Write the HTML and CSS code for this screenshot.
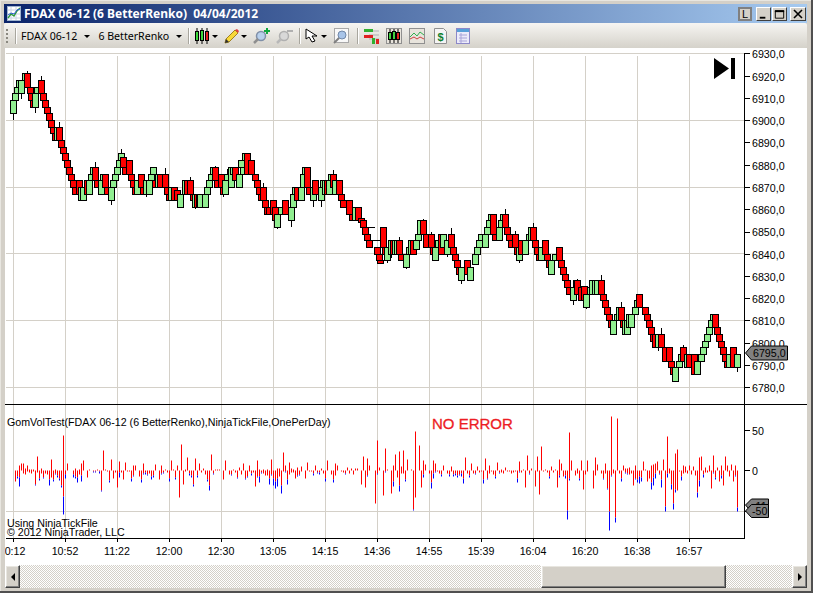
FILE: index.html
```html
<!DOCTYPE html>
<html lang="en">
<head>
<meta charset="utf-8">
<title>FDAX 06-12 (6 BetterRenko) 04/04/2012</title>
<link rel="stylesheet" href="styles.css">
</head>
<body>
<div class="window">
  <header class="titlebar">
    <svg class="title-icon" width="14" height="15" viewBox="0 0 14 15"><rect x=".5" y=".5" width="13" height="14" fill="#fff" stroke="#9fb4d0"/><path d="M1 4h12M1 8h12M1 12h12M4 1v13M9 1v13" stroke="#c8d4e4"/><path d="M1 12l3-4 3 2 3-5 3-3" fill="none" stroke="#2a9a3a" stroke-width="1.3"/><path d="M1 9l3-2 3 1 3-4 3-1" fill="none" stroke="#2f5fd0"/></svg>
    <span class="title-text">FDAX 06-12 (6 BetterRenko)  04/04/2012</span>
    <span class="win-buttons">
      <span class="win-btn lock">L</span>
      <span class="win-btn"><svg width="14" height="12" viewBox="0 0 14 12"><path d="M3 9h6v2H3z"/></svg></span>
      <span class="win-btn"><svg width="14" height="12" viewBox="0 0 14 12"><path d="M2.5 2.500h9v8h-9z" fill="none" stroke="#000"/><path d="M2 2h10v2H2z"/></svg></span>
      <span class="win-btn gap"><svg width="14" height="12" viewBox="0 0 14 12"><path d="M3 2l8 8M11 2l-8 8" stroke="#000" stroke-width="1.6"/></svg></span>
    </span>
  </header>

  <nav class="toolbar">
    <span class="grip"></span>
    <span class="sep"></span>
    <span class="tb-label first">FDAX 06-12</span><span class="caret"></span>
    <span class="tb-label">6 BetterRenko</span><span class="caret"></span>
    <span class="sep"></span>
    <svg class="ico" width="16" height="16" viewBox="0 0 16 16"><path d="M3 0v16M8 0v16M13 0v16" stroke="#000"/><rect x="1.500" y="3.500" width="3" height="9" fill="#3cd83c" stroke="#000"/><rect x="6.500" y="2.500" width="3" height="10" fill="#3cd83c" stroke="#000"/><rect x="11.500" y="3.500" width="3" height="9" fill="#e82020" stroke="#000"/></svg><span class="caret near"></span>
    <svg class="ico wide" width="15" height="16" viewBox="0 0 15 16"><path d="M2 11L11 2l3 3-9 9-4 1z" fill="#f8d838" stroke="#a08020"/><path d="M11 2l3 3 1-2-2-2z" fill="#e04040"/><path d="M1 15l1-4 3 3z" fill="#303030"/></svg><span class="caret near"></span>
    <svg class="ico wide" width="17" height="16" viewBox="0 0 17 16"><circle cx="8" cy="8" r="4.500" fill="#b8d0ec" stroke="#8090a8" stroke-width="1.500"/><path d="M5 11l-4 4" stroke="#8f8f8f" stroke-width="2.500"/><path d="M11 3h6M14 0v6" stroke="#10a840" stroke-width="2"/></svg>
    <svg class="ico gapped" width="17" height="16" viewBox="0 0 17 16"><circle cx="8" cy="8" r="4.500" fill="#d8d8d8" stroke="#b0b0b0" stroke-width="1.500"/><path d="M5 11l-4 4" stroke="#b8b8b8" stroke-width="2.500"/><path d="M11 3h6" stroke="#b0b0b0" stroke-width="2"/></svg>
    <span class="sep"></span>
    <svg class="ico" width="14" height="16" viewBox="0 0 14 16"><path d="M1 1v10l3-2 3 5 3-1-3-5h5z" fill="#fff" stroke="#000"/></svg><span class="caret near"></span>
    <svg class="ico wide" width="16" height="16" viewBox="0 0 16 16"><rect x="1.500" y=".500" width="14" height="14" fill="#f8f8f8" stroke="#a8a8a8"/><circle cx="9" cy="7" r="4" fill="#a8c4e8" stroke="#7088a8"/><path d="M6 10l-5 5" stroke="#808080" stroke-width="2"/></svg>
    <span class="sep s2"></span>
    <svg class="ico" width="17" height="16" viewBox="0 0 17 16"><path d="M6 3h10M6 7h10M6 11h10" stroke="#b0b0b0"/><path d="M1 1h9v3H1z" fill="#30b030"/><path d="M1 7h9v3H1z" fill="#e02020"/><path d="M9 10h3v6H9z" fill="#30b030"/><path d="M13 11h3v5h-3z" fill="#e02020"/></svg>
    <svg class="ico gapped" width="16" height="16" viewBox="0 0 16 16"><rect x=".500" y=".500" width="15" height="15" fill="#e8e4dc" stroke="#909090"/><path d="M4 1v14M8 1v14M12 1v14" stroke="#000"/><rect x="2.500" y="4.500" width="3" height="7" fill="#40d040" stroke="#000"/><rect x="6.500" y="3.500" width="3" height="8" fill="#40d040" stroke="#000"/><rect x="10.500" y="4.500" width="3" height="7" fill="#e02020" stroke="#000"/></svg>
    <svg class="ico gapped2" width="16" height="16" viewBox="0 0 16 16"><rect x=".500" y=".500" width="15" height="15" fill="#e8e4dc" stroke="#909090"/><path d="M1 9l4-4 3 3 3-4 4 3" fill="none" stroke="#30b050"/><path d="M1 11l4-2 3 2 3-2 4 2" fill="none" stroke="#d04040"/></svg>
    <svg class="ico gapped3" width="13" height="16" viewBox="0 0 13 16"><path d="M.5.500h9l3 3v12H.5z" fill="#f4f4f4" stroke="#909090"/><text class="dollar" x="6.500" y="12.500">$</text></svg>
    <svg class="ico gapped4" width="14" height="16" viewBox="0 0 14 16"><rect x=".500" y=".500" width="13" height="15" fill="#ecebfa" stroke="#8c88c8"/><path d="M1 1h12v3H1z" fill="#58a0d8"/><path d="M3 7h8M3 10h8M3 13h8" stroke="#a8a4d8"/><path d="M5 5v10" stroke="#a8a4d8"/></svg>
  </nav>

  <main class="chart-wrap">
    <svg class="chart" width="802" height="517" viewBox="5 48 802 517">
      <path class="grid" d="M13.500 56v482M65.500 56v482M117.500 56v482M169.500 56v482M221.500 56v482M273.500 56v482M325.500 56v482M377.500 56v482M429.500 56v482M481.500 56v482M533.500 56v482M585.500 56v482M637.500 56v482M689.500 56v482"/>
      <path class="grid" d="M6 53.500h739M6 120.500h739M6 187.500h739M6 253.500h739M6 320.500h739M6 387.500h739M6 511.500h739"/>
      <g id="candles"></g>
      <g id="bars"></g>
      <path class="axis" d="M744.500 53v486M5 404.500h803M6 538.500h739"/>
      <path class="axis" d="M745 53.500h5M745 76.500h5M745 98.500h5M745 120.500h5M745 142.500h5M745 165.500h5M745 187.500h5M745 209.500h5M745 232.500h5M745 254.500h5M745 276.500h5M745 298.500h5M745 320.500h5M745 343.500h5M745 365.500h5M745 387.500h5M745 430.500h5M745 470.500h5M745 511.500h5"/>
      <path class="axis" d="M13.500 538v4M65.500 538v4M117.500 538v4M169.500 538v4M221.500 538v4M273.500 538v4M325.500 538v4M377.500 538v4M429.500 538v4M481.500 538v4M533.500 538v4M585.500 538v4M637.500 538v4M689.500 538v4"/>

      <path class="jump" d="M714 58l15 10.500-15 10.500zM731 58h4v21h-4z"/>

      <g class="lbl">
        <text x="752" y="58">6930,0</text><text x="752" y="81">6920,0</text><text x="752" y="103">6910,0</text><text x="752" y="125">6900,0</text><text x="752" y="147">6890,0</text><text x="752" y="170">6880,0</text><text x="752" y="192">6870,0</text><text x="752" y="214">6860,0</text><text x="752" y="236">6850,0</text><text x="752" y="259">6840,0</text><text x="752" y="281">6830,0</text><text x="752" y="303">6820,0</text><text x="752" y="325">6810,0</text><text x="752" y="348">6800,0</text><text x="752" y="370">6790,0</text><text x="752" y="392">6780,0</text>
        <text x="752" y="435">50</text><text x="752" y="475">0</text>
      </g>

      <path class="tag" d="M745.500 505l6-6h17v13h-17z"/>
      <text class="lbl-t" x="752" y="510">-11</text>
      <path class="tag" d="M745.500 511l6-6.500h17v13h-17z"/>
      <text class="lbl-t" x="752" y="515">-50</text>
      <path class="tag" d="M745.500 353l6-7h36v14h-36z"/>
      <text class="lbl-t" x="753" y="357">6795,0</text>

      <text class="lbl-t" x="7" y="426">GomVolTest(FDAX 06-12 (6 BetterRenko),NinjaTickFile,OnePerDay)</text>
      <text class="lbl-t" x="7" y="527">Using NinjaTickFile</text>
      <text class="lbl-t" x="7" y="536">© 2012 NinjaTrader, LLC</text>
      <text class="noerr" x="432" y="429">NO ERROR</text>

      <g class="lbl mid">
        <text x="15" y="555">0:12</text><text x="65" y="555">10:52</text><text x="117" y="555">11:22</text><text x="169" y="555">12:00</text><text x="221" y="555">12:30</text><text x="273" y="555">13:05</text><text x="325" y="555">14:15</text><text x="377" y="555">14:36</text><text x="429" y="555">14:55</text><text x="481" y="555">15:39</text><text x="533" y="555">16:04</text><text x="585" y="555">16:20</text><text x="637" y="555">16:38</text><text x="689" y="555">16:57</text>
      </g>
    </svg>
  </main>

  <div class="scrollbar">
    <span class="sb-btn"><span class="arrow-l"></span></span>
    <span class="sb-track-a"></span>
    <span class="sb-thumb"></span>
    <span class="sb-track-b"></span>
    <span class="sb-btn"><span class="arrow-r"></span></span>
  </div>
</div>
<script src="chart.js"></script>
</body>
</html>
```
FILE: styles.css
```css
* { box-sizing: border-box; }
html, body { margin: 0; padding: 0; background: #d4d0c8; }
.window {
  width: 813px; height: 593px; overflow: hidden;
  display: flex; flex-direction: column;
  padding: 4px 4px 2px 4px;
  background: #d4d0c8;
  border-right: 2px solid #505050;
  border-bottom: 2px solid #505050;
  box-shadow: inset 1px 1px 0 #e8e6e0;
}
.titlebar {
  height: 19px; flex: none;
  display: flex; align-items: center;
  padding: 0 1px 0 3px;
  background: linear-gradient(90deg, #0a246a, #a6caf0);
  color: #fff;
}
.title-icon { flex: none; margin-right: 3px; }
.title-text {
  font: bold 12px "Noto Sans", sans-serif; white-space: pre;
}
.win-buttons { margin-left: auto; display: flex; gap: 1px; }
.win-btn {
  width: 15px; height: 14px;
  display: flex; align-items: center; justify-content: center;
  background: #d4d0c8;
  border: 1px solid; border-color: #fff #404040 #404040 #fff;
}
.win-btn.lock {
  width: 14px; margin-right: 3px;
  font: 11px "Liberation Sans", sans-serif; color: #000;
  border: 2px solid #808080; background: #d4d0c8;
}
.win-btn.gap { margin-left: 2px; width: 16px; }
.toolbar {
  height: 25px; flex: none;
  display: flex; align-items: center;
  padding: 0 0 0 2px;
  background: linear-gradient(180deg, #f6f5f2, #d5d2ca);
  border-radius: 2px;
  font: 10.6px "Noto Sans", sans-serif; color: #000;
}
.grip { width: 2px; height: 14px; margin-right: 7px; background: repeating-linear-gradient(180deg, #8a8880 0 2px, transparent 2px 4px); margin-left: 0; }
.sep { width: 1px; height: 16px; background: #a8a69e; box-shadow: 1px 0 0 #fff; flex: none; }
.tb-label { margin-left: 1px; white-space: nowrap; }
.tb-label.first { margin-left: 5px; }
.caret {
  width: 0; height: 0; margin: 1px 7px 0 7px;
  border-left: 3px solid transparent; border-right: 3px solid transparent; border-top: 3px solid #000;
}
.caret.near { margin: 1px 6px 0 2px; }
.caret + .sep { margin-left: -1px; }
.ico { flex: none; margin-left: 5px; }
.ico.wide { margin-left: 0; }
.ico.gapped { margin-left: 6px; }
.ico.gapped2 { margin-left: 7px; }
.ico.gapped3 { margin-left: 9px; }
.ico.gapped4 { margin-left: 9px; }
.ico + .sep { margin-left: 6px; }
.ico + .sep.s2 { margin-left: 8px; }
.sep + .ico { margin-left: 5px; }
.dollar { font: bold 11px "Liberation Sans", sans-serif; fill: #108030; text-anchor: middle; }
.chart-wrap {
  flex: 1; min-height: 0; margin-left: 1px; background: #fff; overflow: hidden;
}
.chart { display: block; }
.grid { stroke: #d4d0c8; stroke-width: 1; fill: none; }
.axis { stroke: #000; stroke-width: 1; fill: none; }
.jump { fill: #000; }
.lbl text, .lbl-t { font: 10.67px "Liberation Sans", sans-serif; fill: #000; }
.mid text { text-anchor: middle; }
.noerr { font: 15px "Liberation Sans", sans-serif; fill: #ed1c24; stroke: #ed1c24; stroke-width: .3; }
.tag { fill: #808080; stroke: #000; }
.wick { stroke: #000; stroke-width: 1; }
.c-g { fill: #90ee90; stroke: #000; }
.c-r { fill: #f00; stroke: #000; }
.b-r { stroke: #f00; stroke-width: 1; }
.b-b { stroke: #00f; stroke-width: 1; }
.scrollbar { height: 23px; flex: none; display: flex; margin: 0 0 1px 1px; }
.sb-btn, .sb-thumb {
  background: #d4d0c8; flex: none;
  border: 1px solid; border-color: #fff #404040 #404040 #fff;
  box-shadow: inset -1px -1px 0 #808080, inset 1px 1px 0 #e8e6e0;
  display: flex; align-items: center; justify-content: center;
}
.sb-btn { width: 15px; }
.sb-thumb { width: 185px; }
.sb-track-a, .sb-track-b {
  background: repeating-conic-gradient(#d4d0c8 0 25%, #fff 0 50%) 0 0 / 2px 2px;
}
.sb-track-a { flex: 1; }
.sb-track-b { width: 66px; flex: none; }
.arrow-l { width: 0; height: 0; border-top: 4px solid transparent; border-bottom: 4px solid transparent; border-right: 4px solid #000; }
.arrow-r { width: 0; height: 0; border-top: 4px solid transparent; border-bottom: 4px solid transparent; border-left: 4px solid #000; }
```
FILE: chart.js
```js
// Renko candles: x, top level, bottom level, colour, wick top y, wick bottom y
var CANDLES = "10,4,6,g,0,120 12,3,4,g 14,2,3,g 16,1,2,g 18,1,3,g,0,99 22,0,1,g 24,0,2,r,71 27,2,3,r 28,3,4,r 30,4,5,r 32,3,5,g,0,113 34,2,3,g 38,1,3,r,76 40,3,4,r 42,4,5,r 44,5,6,r 46,6,7,r 48,7,8,r 50,8,9,r 52,9,10,r 54,8,10,g 56,8,10,r,122 58,10,11,r 60,11,12,r 62,12,13,r 64,13,14,r 66,14,15,r 68,15,16,r 70,16,17,r 72,17,18,r 76,16,18,r 78,17,19,g 80,17,19,g 84,16,18,r 86,16,18,g 88,15,16,g 90,14,15,g 92,14,16,r,162 94,16,17,r 98,16,18,g 100,15,16,g 102,15,17,r 104,17,18,r 108,17,19,g,0,205 110,16,17,g 112,15,16,g 114,14,15,g 116,13,14,g 118,12,13,g,149 120,12.5,14,r 122,14,15,r 126,13,15,r 128,15,16,r 130,16,17,r 132,17,18,r 134,16,18,g 138,15,17,r 140,17,18,r 143,16,18,g,0,197 146,16,18,g 148,15,16,g 150,14,15,g 152,16,17,r 155,15,17,g 157,15,17,r 162,15,17,r,168 164,17,18,r 166,18,19,r 168,17,19,g 171,17,19,r 174,17.5,19,r 177,18,20,g 182,16,18,g 184,16,18,r 187,16,18,r,177 190,18,19,r 192,18,20,g,0,209 194,18,20,r 196,18,20,r 197,18,20,g 202,18,20,g 204,17,18,g 206,16,17,g 208,15,16,g 210,14,15,g 212,14,16,r,166 214,16,17,r 218,15,17,r 220,17,18,r,0,197 222,16,18,g 224,15,16,g,169 228,14,17,g 230,14,15,g 232,14,16,r 236,15,17,g 238,13,14,g 240,14,15,g 242,12,13,g 244,12,15,r 248,13,15,r 252,15,16,r 254,16,17,r 256,17,18,r 258,18,19,r 260,17,19,r,183 262,19,20,r 264,20,21,r 266,20,21,r 270,19,21,r 272,20,22,r 274,21,23,g,0,229 278,20,21,g 282,19,21,r 288,20,22,g,0,227 290,18,20,g 292,17,18,g 294,17,19,r 298,17,19,g 300,15,17,g 302,14,15,g 304,14,17,r 306,17,18,r 310,17,19,g,0,207 312,16,18,r 318,17,19,g,0,207 320,16,17,g 322,16,18,g 324,16,18,r 326,16,18,g 328,15,16,g 330,15,17,r,170 332,16,18,g 336,16,18,r 338,18,19,r 340,19,20,r 346,19,21,r 349,21,22,r 352,20,22,g 355,20,22,r 358,21.6,22.2,r 360,22,23,r 362,23,24,r 364,24,25,r 366,25,26,r 374,26,27,r 376,27,28,r 377,28,28.4,r 380,23,26,r,227 382,26,27,r 384,26,28,g,0,263 388,25,27,g,0,258 390,25,27,r 392,25,27,g 394,25,27,g 396,25,27,r,237 398,27,28,r 403,27,29,g,0,269 406,26,27,g 408,25,27,g 410,25,27,r 413,25,26.3,g 415,24,25,g 417,22,24,g 420,22,24,r,219 423,24,26,r 428,24,26,r,232 430,26,27,r 432,26,28,g 435,25,26,g 438,24,27,r 440,24,26,g 444,25,27,g,0,257 448,24,26,r,228 450,26,27,r 452,27,28,r 454,28,29,r 456,29,30,r 458,29,31,g,0,284 464,28,30,r 467,29,31,g 472,27,28.5,g 474,26,27,g 476,25,26,g 478,24,25,g 482,24,26,g 484,23,24,g 486,22,23,g 488,21,22,g 490,21,24,r 492,24,25,r 496,23,25,g 498,22,23,g 500,21,22,g 502,21,23,r,209 504,23,24,r 506,24,25,r 508,25,26,r 512,24,26,r,231 514,26,27,r 516,26,28,g,0,263 518,25,27,r 522,25,27,g 526,24,25,g 528,23,25,g 530,23,25,r,223 532,25,26,r 534,26,27,r 536,27,28,r 538,26,28,g 542,25,27,r 544,27,28,r 546,28,29,r 548,28,30,g,0,275 552,27,28,g 556,26,28,r 558,28,29,r 560,29,30,r 562,30,31,r 564,31,32,r 566,32,33,r 570,32,34,g,0,305 573,31,32,g 574,31,33,r,279 578,32,34,r 581,31.8,34,r 583,33,35,g,0,309 587,32,33,g 589,31,33,g 592,31,33,g 594,31,33,g 598,31,33,r,275 600,33,34,r 602,34,35,r 604,35,36,r 606,36,37,r 608,37,38,r 610,37,39,g 614,36,37,g 616,35,37,g 618,35,37,r,302 620,37,38,r 622,37,39,g 624,37,39,g 626,36,38,g 628,36,38,g 632,35,36,g 634,34,35,g 636,33,35,r 642,35,36,r 644,36,37,r 646,37,38,r 648,38,39,r 650,39,40,r 652,39,41,r 655,39,41,g,0,351 658,39,41,r,328 662,41,43,r 666,41,43,r 668,43,44,r 670,44,45,r 672,44,46,g 676,43,44,g 678,42,43,g 680,41,43,r,345 684,42,44,g 686,42,44,r 691,42,45,r 694,43,45,g 698,42,43,g 700,41,42,g 702,40,41,g 704,39,40,g 706,38,39,g 708,37,38,g 710,36,37,g 712,36,38,r 714,38,39,r 716,39,40,r 718,40,41,r 720,41,42,r 722,42,43,r 724,43,44,r 726,42,44,g 730,41,44,r 734,42,44,g,0,372";

// Volume bars: x, up, red down, blue end
var BARS = "15,0,11,0 17,0,6,8 19,5,7,16 21,7,0,0 23,7,3,0 25,2,4,0 27,5,1,0 29,1,2,0 31,1,3,0 33,1,1,0 35,0,14,15 37,14,2,0 39,0,8,10 41,2,3,0 43,0,7,8 45,0,3,0 47,0,4,0 49,0,9,15 51,11,7,0 53,0,9,11 55,1,3,4 57,0,5,7 59,0,8,10 61,0,15,17 63,35,26,44 65,0,4,8 67,7,0,0 73,0,4,7 75,2,6,8 77,0,7,12 79,1,4,0 81,7,5,11 83,10,0,0 87,0,7,0 89,1,0,0 93,0,1,2 95,0,1,2 97,1,0,0 99,0,1,3 101,0,20,21 103,20,0,0 105,1,0,0 107,0,1,0 109,0,10,12 111,11,0,0 113,0,8,0 115,0,2,0 117,0,17,0 119,9,2,7 121,0,2,0 123,0,9,0 125,8,0,0 127,0,1,0 129,0,1,0 131,0,8,11 133,5,5,6 135,5,0,0 139,0,6,0 141,0,9,12 143,7,3,4 145,0,2,4 147,0,4,5 149,0,3,0 151,0,6,9 153,0,5,7 155,6,0,0 159,0,9,0 161,5,3,4 163,0,2,3 165,1,0,0 167,0,2,0 169,0,8,11 171,10,0,0 173,1,0,0 175,0,7,9 177,5,0,0 179,0,27,0 181,26,0,0 183,0,14,0 185,1,1,0 187,13,0,0 189,0,3,5 191,0,5,7 193,0,14,16 195,12,0,0 197,0,5,7 199,7,0,0 201,0,2,0 203,2,0,0 205,0,4,0 207,0,9,11 209,0,15,20 211,16,0,0 213,0,3,4 215,1,0,0 217,1,0,0 219,1,0,0 223,0,9,0 225,10,0,0 229,0,4,0 231,0,4,5 233,1,0,0 235,0,2,0 237,0,7,8 239,3,0,0 241,0,4,0 243,7,0,0 245,0,8,9 247,0,6,7 249,5,1,0 251,0,3,5 253,0,2,0 255,0,16,0 257,10,6,7 259,1,6,12 261,0,2,3 263,1,3,0 265,0,5,0 267,1,5,0 269,0,8,14 271,11,4,5 273,0,8,15 275,0,11,18 277,2,8,16 279,2,6,0 281,0,15,23 283,18,1,0 285,5,1,2 287,0,9,14 289,8,4,0 291,2,2,0 293,1,2,0 295,0,8,0 297,3,5,6 299,0,4,5 301,4,1,0 305,0,8,0 307,8,0,0 309,0,1,0 311,0,1,0 313,0,3,5 315,5,0,0 317,0,2,3 319,0,2,4 321,2,0,0 323,0,3,0 325,0,8,11 327,10,0,0 331,0,4,0 333,0,9,12 335,7,5,0 337,5,0,0 341,0,1,0 343,0,2,0 345,0,3,4 347,3,0,0 349,0,3,0 351,2,0,0 353,0,4,0 355,2,0,0 357,2,0,0 361,0,14,0 363,14,0,0 365,0,17,0 367,12,5,6 369,5,0,0 375,0,33,0 377,30,3,4 379,3,0,0 383,0,25,0 385,22,1,2 387,1,0,0 391,0,23,0 393,5,11,16 395,16,0,0 397,0,7,0 399,19,15,21 401,4,3,0 403,20,3,0 405,0,9,11 407,11,0,0 411,1,0,0 413,0,39,40 415,39,27,0 419,25,0,0 421,0,17,0 423,10,4,7 425,6,0,0 429,0,3,0 431,0,12,18 433,10,3,8 435,7,1,2 437,0,1,0 439,0,3,0 441,0,4,6 443,5,0,0 447,0,3,0 449,0,4,6 451,4,1,0 453,0,4,6 455,0,3,5 457,0,5,7 459,0,4,5 461,0,3,6 463,0,8,13 465,13,0,0 467,0,3,0 469,0,5,7 471,7,0,0 473,0,3,0 475,0,3,4 477,4,0,0 479,0,2,0 481,0,1,0 483,0,9,13 485,12,0,0 487,0,8,9 489,5,3,0 491,0,1,0 493,0,4,0 495,0,6,8 497,8,0,0 499,0,2,3 501,1,2,0 503,0,3,0 505,3,0,0 507,0,1,0 509,0,1,0 511,0,3,0 513,0,2,0 515,0,1,0 517,0,8,12 519,9,1,2 521,0,2,0 523,1,0,0 525,0,17,0 527,15,0,0 529,0,3,4 531,2,0,0 535,0,16,0 537,14,1,0 539,0,24,0 541,24,0,0 543,0,1,0 545,1,0,0 547,0,2,0 549,0,6,8 551,4,0,0 553,0,2,0 555,1,0,0 557,0,17,0 559,11,5,7 561,7,0,0 563,0,6,0 565,0,5,8 567,0,40,49 569,38,8,10 571,10,0,0 575,0,5,0 577,2,3,0 579,0,8,10 581,10,0,0 583,0,19,0 585,0,4,0 587,10,1,0 593,0,18,0 595,13,5,0 597,6,0,0 601,0,3,0 603,0,8,9 605,7,3,0 607,0,18,19 609,0,41,60 611,54,5,6 613,1,3,0 615,0,47,52 617,52,0,0 619,0,3,0 621,0,8,11 623,5,0,0 625,2,2,3 627,2,3,4 629,3,4,0 631,0,3,0 633,0,15,0 635,5,8,9 637,0,9,12 639,0,6,13 641,0,7,11 643,9,0,0 645,1,0,0 647,0,11,0 649,0,8,0 651,5,12,19 653,6,7,15 655,7,3,8 657,9,0,0 659,0,3,4 661,0,9,17 663,11,0,0 665,0,36,41 667,34,3,7 669,2,3,0 671,0,14,19 673,0,33,39 675,17,19,22 677,21,20,0 679,0,1,0 681,0,6,10 683,5,3,0 685,4,2,0 687,0,3,0 689,5,0,0 691,0,4,0 693,4,0,0 695,0,5,0 697,0,22,27 699,13,10,16 701,14,0,0 703,0,4,7 705,3,2,0 707,0,2,0 709,5,1,0 711,0,18,0 713,15,2,3 715,0,7,9 717,3,0,0 719,0,11,0 721,5,5,8 723,0,15,0 725,14,0,0 727,5,1,0 729,0,6,0 731,6,0,0 733,0,11,0 735,5,5,6 737,0,37,41";

var NS = "http://www.w3.org/2000/svg";
function el(name, attrs, parent) {
  var n = document.createElementNS(NS, name);
  for (var k in attrs) n.setAttribute(k, attrs[k]);
  parent.appendChild(n);
  return n;
}
function levelY(n) { return Math.round(73.3 + 6.68 * n) + 0.5; }

var candleGroup = document.getElementById("candles");
CANDLES.split(" ").forEach(function (s) {
  var p = s.split(",");
  var x = +p[0], top = levelY(+p[1]), bot = levelY(+p[2]);
  var wt = +p[4] ? +p[4] : top, wb = +p[5] ? +p[5] : bot;
  if (wt !== top || wb !== bot) {
    el("line", { "class": "wick", x1: x + 3.5, x2: x + 3.5, y1: wt, y2: wb }, candleGroup);
  }
  el("rect", { "class": p[3] === "g" ? "c-g" : "c-r", x: x + 0.5, y: top, width: 6, height: bot - top }, candleGroup);
});
[[368, 227.5, 375], [370, 240.5, 380]].forEach(function (d) {
  el("line", { "class": "wick", x1: d[0], x2: d[2], y1: d[1], y2: d[1] }, candleGroup);
});

var barGroup = document.getElementById("bars");
var ZERO = 470.5;
BARS.split(" ").forEach(function (s) {
  var p = s.split(",").map(Number);
  var x = p[0] + 0.5;
  el("line", { "class": "b-r", x1: x, x2: x, y1: ZERO - p[1], y2: ZERO + p[2] }, barGroup);
  if (p[3] > 0) {
    el("line", { "class": "b-b", x1: x, x2: x, y1: ZERO + p[2], y2: ZERO + p[3] }, barGroup);
  }
});
```
